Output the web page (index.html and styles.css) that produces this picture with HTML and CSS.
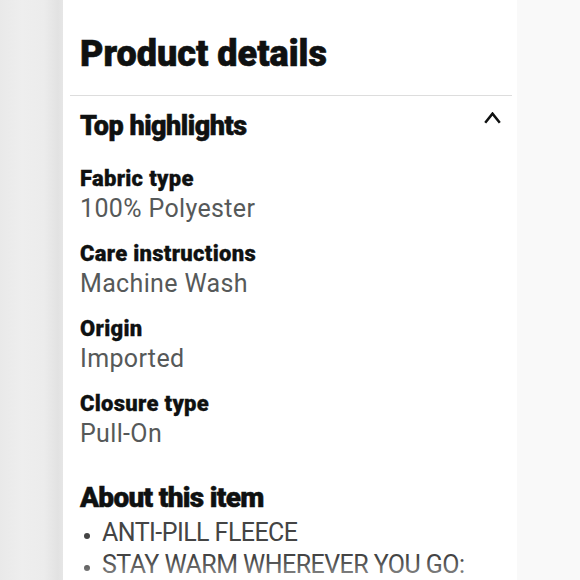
FILE: index.html
```html
<!DOCTYPE html>
<html lang="en">
<head>
<meta charset="utf-8">
<title>Product details</title>
<link rel="stylesheet" href="styles.css">
</head>
<body>
<div class="gutter gutter-left"></div>
<main class="card">
  <h1 class="title">Product details</h1>
  <hr class="divider">
  <section class="highlights">
    <div class="section-head">
      <h2 class="section-title">Top highlights</h2>
      <svg class="chevron" width="17" height="12" viewBox="0 0 17 12" aria-hidden="true"><path d="M1.2 10.8 L8.5 1.6 L15.8 10.8" fill="none" stroke="#0f1111" stroke-width="2.5" stroke-linejoin="miter"/></svg>
    </div>
    <dl class="facts">
      <div class="fact"><dt>Fabric type</dt><dd>100% Polyester</dd></div>
      <div class="fact"><dt>Care instructions</dt><dd>Machine Wash</dd></div>
      <div class="fact"><dt>Origin</dt><dd>Imported</dd></div>
      <div class="fact"><dt>Closure type</dt><dd>Pull-On</dd></div>
    </dl>
  </section>
  <section class="about">
    <h2 class="about-title">About this item</h2>
    <ul class="bullets">
      <li>ANTI-PILL FLEECE</li>
      <li>STAY WARM WHEREVER YOU GO:</li>
    </ul>
  </section>
  <div class="fade"></div>
</main>
<div class="gutter gutter-right"></div>
</body>
</html>
```
FILE: styles.css
```css
html, body {
  margin: 0;
  padding: 0;
  height: 580px;
  overflow: hidden;
}
body {
  display: flex;
  font-family: Roboto, "Liberation Sans", sans-serif;
  color: #0f1111;
  background: #f8f8f8;
}
.gutter-left {
  width: 63px;
  flex: none;
  background: linear-gradient(90deg, #e9e9e9 0%, #eeeeee 35%, #ececec 70%, #e2e2e2 92%, #e6e6e6 100%);
}
.gutter-right {
  flex: 1;
  background: #f9f9f9;
}
.card {
  position: relative;
  width: 454px;
  flex: none;
  background: #ffffff;
  padding: 32px 5px 0 7px;
  box-sizing: border-box;
}
.title {
  margin: 0;
  padding-left: 10px;
  font-size: 36px;
  line-height: 44px;
  font-weight: 900;
  letter-spacing: 0;
  -webkit-text-stroke: 0.6px #0f1111;
}
.divider {
  margin: 19px 0 0 0;
  border: 0;
  height: 1px;
  background: #dddddd;
}
.highlights {
  padding: 0 11px 0 10px;
  margin-top: 13px;
}
.section-head {
  display: flex;
  justify-content: space-between;
  align-items: flex-start;
}
.section-title {
  margin: 0;
  font-size: 27px;
  line-height: 34px;
  font-weight: 900;
  letter-spacing: -0.5px;
  -webkit-text-stroke: 0.5px #0f1111;
}
.chevron {
  margin-top: 3px;
}
.facts {
  margin: 22px 0 0 0;
  display: flex;
  flex-direction: column;
  gap: 15px;
}
.fact dt {
  font-size: 22px;
  line-height: 28px;
  font-weight: 900;
  letter-spacing: 0.3px;
  -webkit-text-stroke: 0.3px #0f1111;
}
.fact dd {
  margin: 0;
  font-size: 25px;
  line-height: 32px;
  color: #565959;
  letter-spacing: 0.35px;
}
.about {
  padding: 0 11px 0 10px;
  margin-top: 31px;
}
.about-title {
  margin: 0;
  font-size: 28px;
  line-height: 34px;
  font-weight: 900;
  letter-spacing: -0.7px;
  -webkit-text-stroke: 0.5px #0f1111;
}
.bullets {
  margin: 2px 0 0 0;
  padding: 0 0 0 22px;
  font-size: 25px;
  line-height: 32px;
  color: #444444;
  letter-spacing: -0.55px;
}
.bullets li::marker {
  font-size: 18px;
}
.fade {
  position: absolute;
  left: 0;
  right: 0;
  bottom: 0;
  height: 22px;
  background: linear-gradient(180deg, rgba(255,255,255,0) 0%, rgba(255,255,255,0.45) 100%);
}
```
